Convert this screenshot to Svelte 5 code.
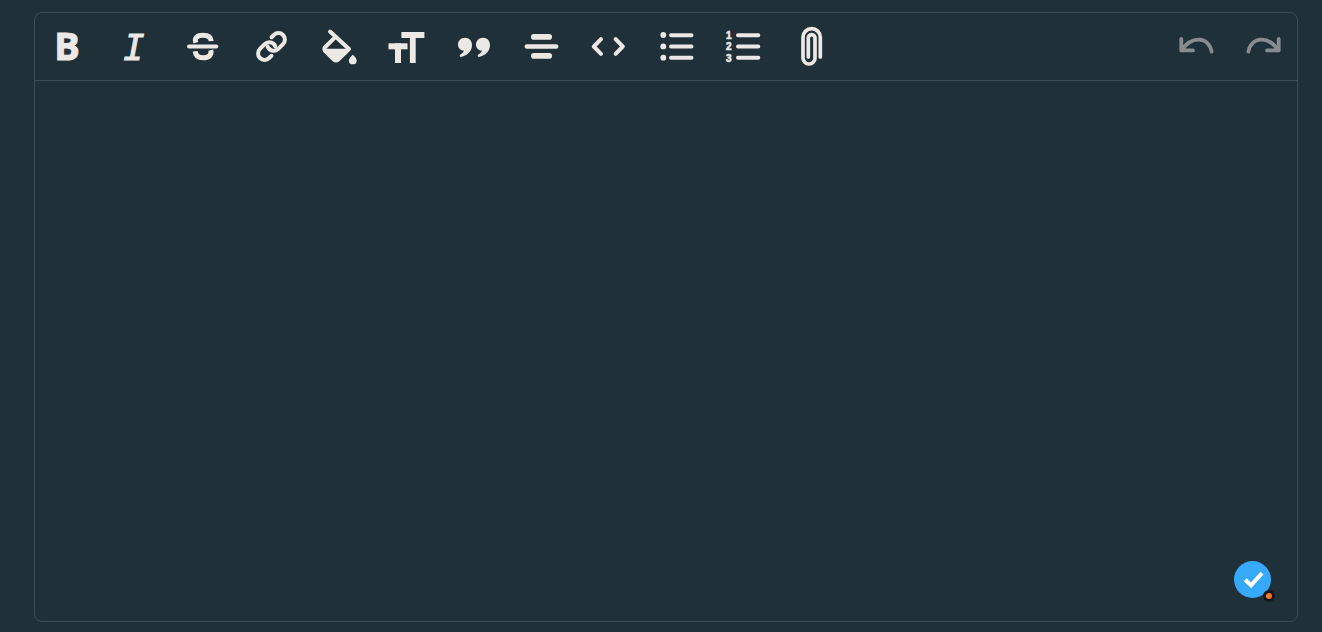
<script>
  let content = '';
</script>

<main class="page">
  <div class="editor">
    <div class="toolbar" role="toolbar" aria-label="Formatting">
      <div class="group formatting">
        <button type="button" aria-label="Bold">
          <svg viewBox="0 0 48 47"><text class="bold" x="24" y="37" text-anchor="middle">B</text></svg>
        </button>
        <button type="button" aria-label="Italic">
          <svg viewBox="0 0 48 47"><text class="italic" x="23" y="37" text-anchor="middle">I</text></svg>
        </button>
        <button type="button" aria-label="Strikethrough">
          <svg viewBox="0 0 48 47">
            <path class="line" stroke-width="4" d="M11 23.4H38.3" />
            <path class="line flat" stroke-width="5" d="M17.8 19.8C16 14.4 19.6 12.3 25 12.3C30.4 12.3 33 14.4 33.2 18.2M17.2 28.2C17.6 32.8 20.4 34.8 25 34.8C30.6 34.8 34 32 32.8 27.2" />
          </svg>
        </button>
        <button type="button" aria-label="Link">
          <svg viewBox="0 0 48 47">
            <g class="line" stroke-width="4" transform="translate(25.5 23.5) rotate(-45)">
              <path d="M6.6-6.5H9.8A6.5 6.5 0 0 1 9.8 6.5H3.1A6.5 6.5 0 0 1-2.8-2.7" />
              <path d="M-6.6 6.5H-9.8A6.5 6.5 0 0 1-9.8-6.5H-3.1A6.5 6.5 0 0 1 2.8 2.7" />
            </g>
          </svg>
        </button>
        <button type="button" aria-label="Colour">
          <svg viewBox="0 0 48 47">
            <path class="line" stroke-width="4" d="M16 8.5L35 26L24.2 36.6Q22 38.2 19.8 36.6L11 27.8Q9.8 26 11 24.2L21.8 13.6" />
            <path d="M10.5 25.8H35.5L24 37.5Q22 39 20 37.5Z" />
            <path d="M38.8 31.7C40.6 33.4 42.7 35.6 42.7 37.4A3.9 3.9 0 0 1 34.9 37.4C34.9 35.6 37 33.4 38.8 31.7Z" />
          </svg>
        </button>
        <button type="button" aria-label="Heading">
          <svg viewBox="0 0 48 47">
            <rect x="20.4" y="9" width="23" height="6" />
            <rect x="28.9" y="9" width="5.8" height="31" />
            <rect x="7.5" y="20.3" width="19" height="6" />
            <rect x="14" y="20.3" width="6" height="19.7" />
          </svg>
        </button>
        <button type="button" aria-label="Quote">
          <svg viewBox="0 0 48 47">
            <path d="M16 14.7C20.4 14.7 23 17.8 23 22C23 28 18.6 32.6 12 33.9C10.5 34.1 10.2 32.4 11.4 31.6C13.6 30.2 14.7 28.8 15 27.8C11.3 27.6 9 24.8 9 21.5C9 17.6 12.1 14.7 16 14.7Z" />
            <path d="M34 14.7C38.4 14.7 41 17.8 41 22C41 28 36.6 32.6 30 33.9C28.5 34.1 28.2 32.4 29.4 31.6C31.6 30.2 32.7 28.8 33 27.8C29.3 27.6 27 24.8 27 21.5C27 17.6 30.1 14.7 34 14.7Z" />
          </svg>
        </button>
        <button type="button" aria-label="Align">
          <svg viewBox="0 0 48 47">
            <rect x="15" y="11" width="21" height="5.7" rx="2.8" />
            <rect x="8.6" y="21.3" width="33.8" height="4.4" rx="2.2" />
            <rect x="15" y="30" width="21" height="5.7" rx="2.8" />
          </svg>
        </button>
        <button type="button" aria-label="Code">
          <svg viewBox="0 0 48 47">
            <path class="line" stroke-width="4" d="M17 16.2L9.8 23.5L17 30.8M31.6 16.2L38.8 23.5L31.6 30.8" />
          </svg>
        </button>
        <button type="button" aria-label="Bulleted list">
          <svg viewBox="0 0 48 47">
            <circle cx="11.3" cy="12" r="2.9" />
            <circle cx="11.3" cy="23.4" r="2.9" />
            <circle cx="11.3" cy="34.7" r="2.9" />
            <path class="line" stroke-width="4" d="M19 12.2H39.5M19 23.5H39.5M19 34.8H39.5" />
          </svg>
        </button>
        <button type="button" aria-label="Numbered list">
          <svg viewBox="0 0 48 47">
            <g class="digits">
              <text x="7" y="16">1</text>
              <text x="7" y="27">2</text>
              <text x="7" y="39">3</text>
            </g>
            <path class="line" stroke-width="4" d="M19 12.2H39.3M19 23.5H39.3M19 34.8H39.3" />
          </svg>
        </button>
        <button type="button" aria-label="Attach file">
          <svg viewBox="0 0 48 47">
            <path class="line" stroke-width="3.7" d="M33.3 34V14.2A8.65 8.65 0 0 0 16 14.2V35A6 6 0 0 0 28 35V15A3.35 3.35 0 0 0 21.3 15V34" />
          </svg>
        </button>
      </div>
      <div class="group history">
        <button type="button" aria-label="Undo">
          <svg viewBox="0 0 48 47">
            <path class="line" stroke-width="3.8" d="M8.3 16V27.4H20M8.8 27C19 12.5 35.5 13.5 38.6 28.6" />
          </svg>
        </button>
        <button type="button" aria-label="Redo">
          <svg viewBox="0 0 48 47">
            <path class="line" stroke-width="3.8" d="M37.7 16V27.4H26M37.2 27C27 12.5 10.5 13.5 7.4 28.6" />
          </svg>
        </button>
      </div>
    </div>

    <textarea bind:value={content} aria-label="Message"></textarea>

    <button type="button" class="checker" aria-label="Check writing">
      <svg viewBox="0 0 37 37"><path d="M11.2 18.8L17 24.3L28 12.2" /></svg>
      <span class="dot"></span>
    </button>
  </div>
</main>

<style>
  :global(body) {
    margin: 0;
    background: #203038;
  }

  .page {
    display: flex;
    box-sizing: border-box;
    min-height: 100vh;
    padding: 12px 24px 10px 34px;
    font-family: "Open Sans", sans-serif;
  }

  .editor {
    position: relative;
    display: flex;
    flex: 1;
    flex-direction: column;
    min-width: 0;
    border: 1px solid #3e4c53;
    border-radius: 8px;
  }

  .toolbar {
    display: flex;
    justify-content: space-between;
    padding: 10px 8px;
    border-bottom: 1px solid #3e4c53;
  }

  .group {
    display: flex;
    color: #ece8e5;
  }

  .formatting {
    flex: 0 1 792px;
    justify-content: space-between;
  }

  .history {
    gap: 20px;
    color: #868c90;
  }

  button {
    padding: 0;
    border: 0;
    background: none;
    color: inherit;
    cursor: pointer;
  }

  .toolbar svg {
    display: block;
    overflow: visible;
    width: 48px;
    height: 47px;
    fill: currentColor;
  }

  .line {
    fill: none;
    stroke: currentColor;
    stroke-linecap: round;
    stroke-linejoin: round;
  }

  .flat {
    stroke-linecap: butt;
  }

  .bold {
    font: bold 38px "Open Sans", sans-serif;
    stroke: currentColor;
    stroke-width: 1;
  }

  .italic {
    font: italic 35px "DejaVu Sans Mono", monospace;
    stroke: currentColor;
    stroke-width: 1;
  }

  .digits {
    font: bold 10px "Liberation Sans", sans-serif;
    stroke: currentColor;
    stroke-width: 0.6;
  }

  textarea {
    flex: 1;
    padding: 16px;
    border: 0;
    outline: 0;
    background: transparent;
    color: #ece8e5;
    font: inherit;
    resize: none;
  }

  .checker {
    position: absolute;
    right: 26px;
    bottom: 23px;
    width: 37px;
    height: 37px;
    border-radius: 50%;
    background: #36a9fb;
  }

  .checker svg {
    display: block;
    fill: none;
    stroke: #fff;
    stroke-width: 4;
  }

  .dot {
    position: absolute;
    right: -4px;
    bottom: -4px;
    width: 6px;
    height: 6px;
    border: 3px solid #15191b;
    border-radius: 50%;
    background: #ff7433;
  }
</style>
